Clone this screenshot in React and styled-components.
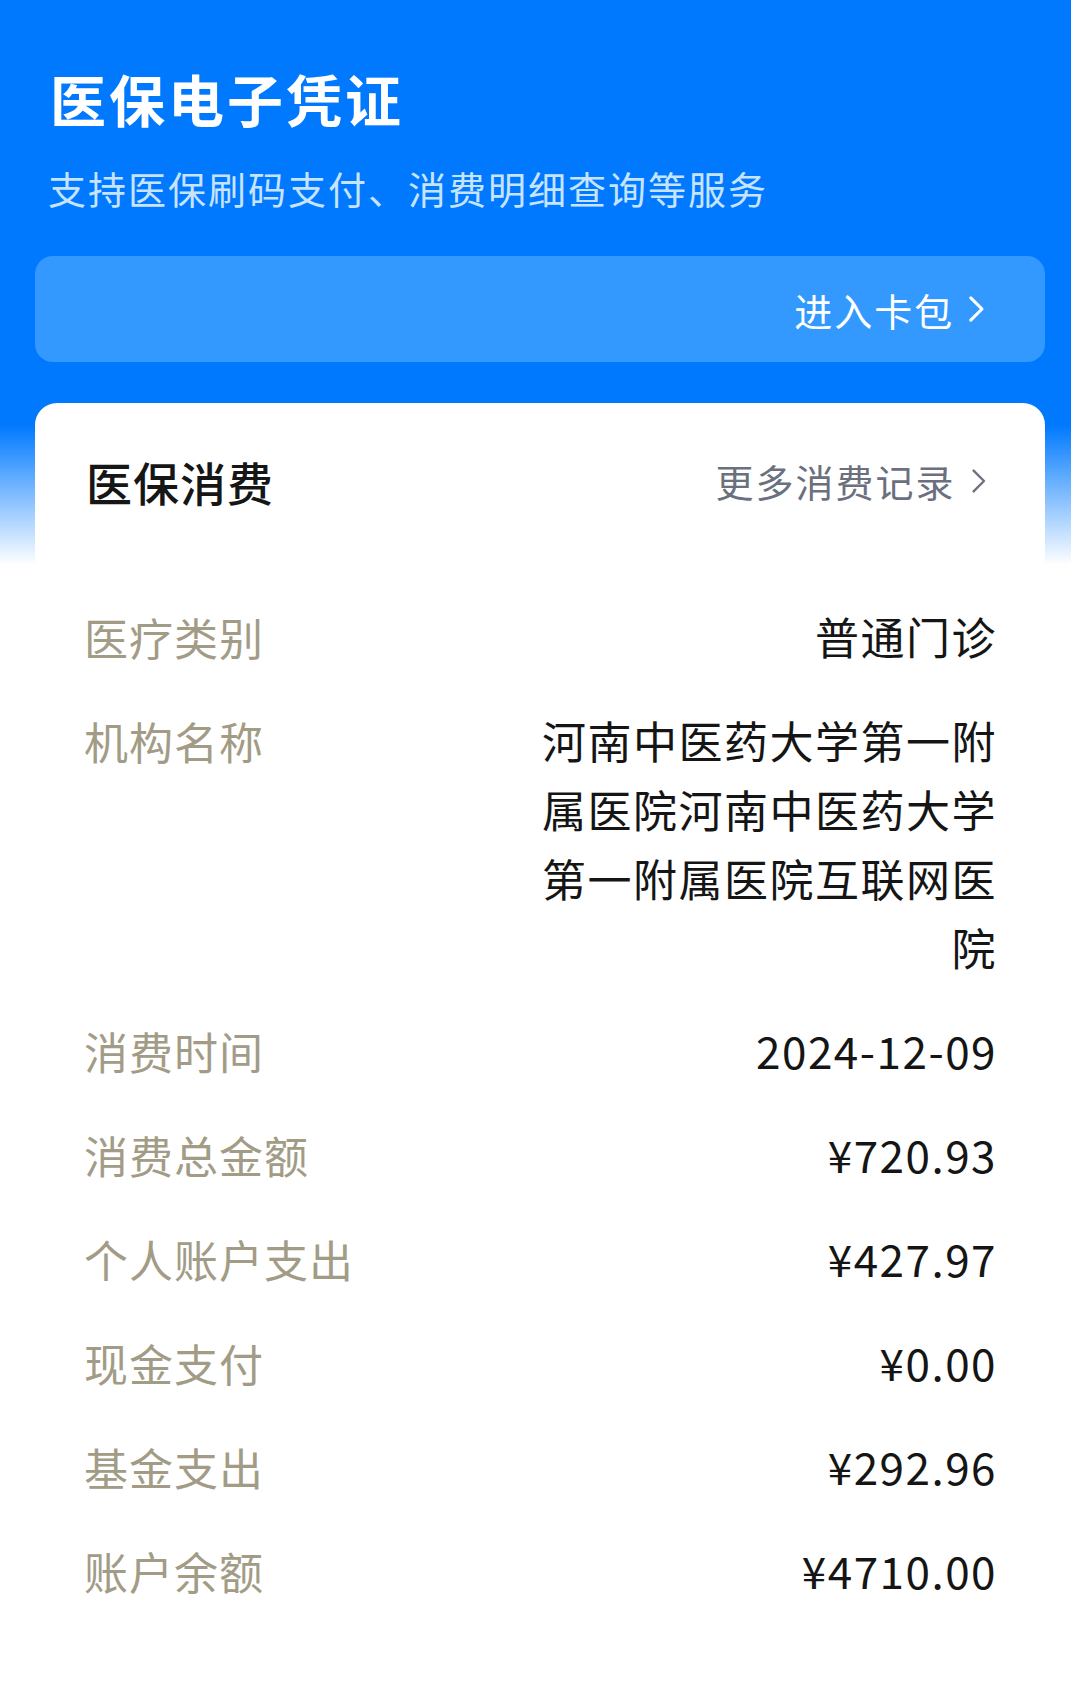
import React from "react";
import styled, { createGlobalStyle } from "styled-components";

const GlobalStyle = createGlobalStyle`
  html, body {
    margin: 0;
    padding: 0;
    background: #ffffff;
    font-family: "Noto Sans CJK SC", "Noto Sans", sans-serif;
  }
`;

const records = [
  { label: "医疗类别", value: "普通门诊" },
  { label: "机构名称", value: "河南中医药大学第一附属医院河南中医药大学第一附属医院互联网医院" },
  { label: "消费时间", value: "2024-12-09" },
  { label: "消费总金额", value: "¥720.93" },
  { label: "个人账户支出", value: "¥427.97" },
  { label: "现金支付", value: "¥0.00" },
  { label: "基金支出", value: "¥292.96" },
  { label: "账户余额", value: "¥4710.00" },
];

const Chevron = ({ size = 22, color = "currentColor", width = 2.4 }) => (
  <svg width={size * 0.6} height={size} viewBox="0 0 12 20" fill="none">
    <path d="M2 2l8 8-8 8" stroke={color} strokeWidth={width} strokeLinecap="round" strokeLinejoin="round" />
  </svg>
);

const App = () => {
  return (
    <Page>
      <GlobalStyle />
      <Hero>
        <Title>医保电子凭证</Title>
        <Subtitle>支持医保刷码支付、消费明细查询等服务</Subtitle>
      </Hero>
      <WalletBar>
        <WalletLink>
          进入卡包
          <Chevron size={28} width={2.2} />
        </WalletLink>
      </WalletBar>
      <Card>
        <CardHeader>
          <CardTitle>医保消费</CardTitle>
          <MoreLink>
            更多消费记录
            <Chevron size={26} width={1.8} />
          </MoreLink>
        </CardHeader>
        <Rows>
          {records.map((r) => (
            <Row key={r.label}>
              <Label>{r.label}</Label>
              <Value>{r.value}</Value>
            </Row>
          ))}
        </Rows>
      </Card>
    </Page>
  );
};

const Page = styled.div`
  min-height: 1689px;
  box-sizing: border-box;
  padding: 0 26px 0 35px;
  background: linear-gradient(180deg, #0079ff 0px, #0079ff 425px, #ffffff 565px);
`;

const Hero = styled.div`
  padding: 58px 0 0 15px;
`;

const Title = styled.h1`
  margin: 0;
  font-size: 56px;
  line-height: 80px;
  font-weight: 700;
  letter-spacing: 3px;
  color: #ffffff;
`;

const Subtitle = styled.p`
  margin: 22px 0 0 -2px;
  font-size: 38px;
  line-height: 56px;
  letter-spacing: 2px;
  color: #c6e4ff;
`;

const WalletBar = styled.div`
  margin-top: 40px;
  height: 106px;
  border-radius: 18px;
  background: #3399ff;
  display: flex;
  align-items: center;
  justify-content: flex-end;
  padding-right: 60px;
`;

const WalletLink = styled.div`
  display: flex;
  align-items: center;
  gap: 14px;
  font-size: 38px;
  letter-spacing: 2px;
  color: #ffffff;
`;

const Card = styled.div`
  margin-top: 41px;
  background: #ffffff;
  border-radius: 22px 22px 0 0;
`;

const CardHeader = styled.div`
  height: 165px;
  box-sizing: border-box;
  display: flex;
  align-items: center;
  justify-content: space-between;
  padding: 0 58px 10px 51px;
`;

const CardTitle = styled.h2`
  margin: 0;
  font-size: 46px;
  font-weight: 500;
  letter-spacing: 1px;
  color: #161616;
`;

const MoreLink = styled.div`
  display: flex;
  align-items: center;
  gap: 16px;
  font-size: 38px;
  letter-spacing: 2px;
  color: #6b707e;
`;

const Rows = styled.div`
  padding: 17px 48px 0 49px;
`;

const Row = styled.div`
  display: flex;
  justify-content: space-between;
  align-items: flex-start;
  padding: 17px 0;
`;

const Label = styled.div`
  flex-shrink: 0;
  font-size: 44px;
  line-height: 70px;
  letter-spacing: 1px;
  color: #a29c86;
`;

const Value = styled.div`
  max-width: 462px;
  text-align: right;
  font-size: 44px;
  line-height: 69px;
  letter-spacing: 1.5px;
  color: #151515;
  word-break: break-all;
`;

export default App;
